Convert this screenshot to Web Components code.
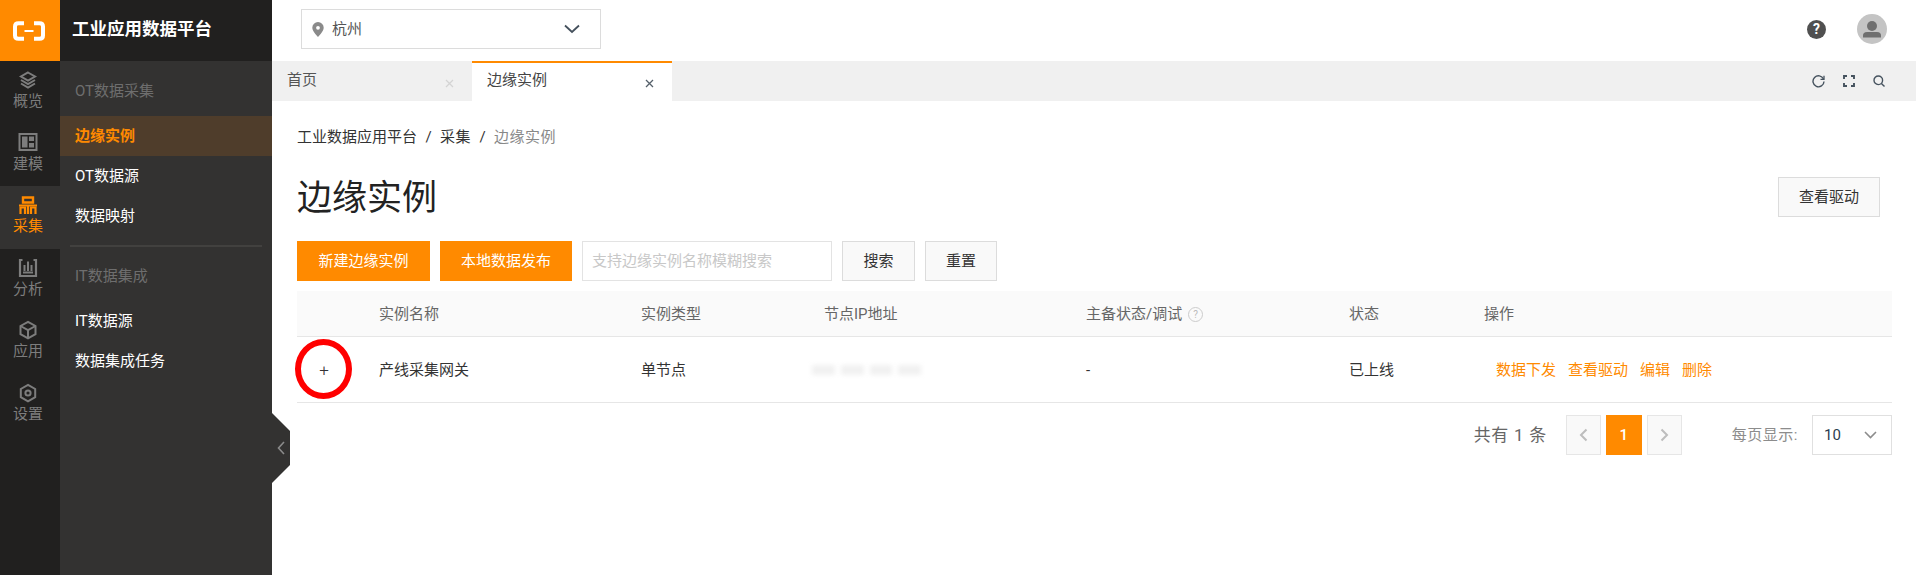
<!DOCTYPE html>
<html lang="zh-CN">
<head>
<meta charset="utf-8">
<title>边缘实例</title>
<style>
  html, body { margin: 0; height: 100%; overflow: hidden; background: #fff; }
  body { font: 15px/20px Roboto, "Noto Sans CJK SC", sans-serif; color: #333; }
</style>
</head>
<body>
<app-shell>
  <side-rail slot="rail">
    <rail-item label="概览" icon="layers"></rail-item>
    <rail-item label="建模" icon="model"></rail-item>
    <rail-item label="采集" icon="collect" active></rail-item>
    <rail-item label="分析" icon="chart"></rail-item>
    <rail-item label="应用" icon="box"></rail-item>
    <rail-item label="设置" icon="gear"></rail-item>
  </side-rail>
  <side-nav slot="nav" heading="工业应用数据平台">
    <nav-group>OT数据采集</nav-group>
    <nav-link active>边缘实例</nav-link>
    <nav-link>OT数据源</nav-link>
    <nav-link>数据映射</nav-link>
    <nav-divider></nav-divider>
    <nav-group>IT数据集成</nav-group>
    <nav-link>IT数据源</nav-link>
    <nav-link>数据集成任务</nav-link>
  </side-nav>
  <top-bar slot="top" city="杭州"></top-bar>
  <tab-bar slot="top">
    <tab-item>首页</tab-item>
    <tab-item active>边缘实例</tab-item>
  </tab-bar>
  <instance-page></instance-page>
</app-shell>

<script>
const ICONS = {
  layers: '<path d="M9 1.500 16 5.500 9 9.500 2 5.500Z" stroke-width="2"/><path d="M2 9 9 13 16 9M2 12.500 9 16.500 16 12.500" stroke-width="2"/>',
  model: '<rect x="0.500" y="0" width="17" height="16" stroke-width="2"/><rect x="3" y="2.500" width="5.500" height="11" fill="currentColor" stroke="none"/><rect x="10" y="2.500" width="5" height="4.500" fill="currentColor" stroke="none"/><rect x="10" y="9" width="5" height="4.500" fill="currentColor" stroke="none"/>',
  collect: '<path d="M4 1.500H14V6.500H4Z" stroke-width="2.400"/><path d="M0 9.500H18" stroke-width="2"/><path d="M1.500 18V11.500H6V18M9 9.500V18M12 18V11.500H16.500V18" stroke-width="2.200"/>',
  chart: '<path d="M3.500 1H1V17H17V1H14.500" stroke-width="2.200"/><path d="M5.500 12V6M9 12V2.500M12.500 12V6M4 13.500H14" stroke-width="2"/>',
  box: '<path d="M9 .8 16.500 5V13.200L9 17.400 1.500 13.200V5Z" stroke-width="2"/><path d="M1.500 5 9 9.200 16.500 5M9 9.200V17.400" stroke-width="2"/>',
  gear: '<path d="M9 .8 16.200 5V13.200L9 17.400 1.800 13.200V5Z" stroke-width="2"/><circle cx="9" cy="9" r="2.600" stroke-width="2"/>'
};

class AppShell extends HTMLElement {
  constructor() {
    super();
    this.attachShadow({ mode: 'open' });
    this.shadowRoot.innerHTML = `
      <style>
        :host { display: flex; width: 100%; height: 100vh; position: relative; }
        .side { display: flex; flex: none; width: 272px; }
        .main { flex: 1; min-width: 0; display: flex; flex-direction: column; }
        .handle { position: absolute; left: 272px; top: 413px; width: 18px; height: 70px; background: #333231;
          clip-path: polygon(0 0, 100% 18px, 100% 52px, 0 100%); color: #8a8a8a; display: flex; align-items: center; justify-content: center; }
      </style>
      <div class="side"><slot name="rail"></slot><slot name="nav"></slot></div>
      <div class="main"><slot name="top"></slot><slot></slot></div>
      <div class="handle"><svg width="8" height="14" viewBox="0 0 8 14" fill="none" stroke="currentColor" stroke-width="1.600"><path d="M7 1 1.500 7 7 13"/></svg></div>`;
  }
}

class SideRail extends HTMLElement {
  constructor() {
    super();
    this.attachShadow({ mode: 'open' });
    this.shadowRoot.innerHTML = `
      <style>
        :host { display: block; flex: none; width: 60px; background: #21201f; }
        .logo { height: 61px; background: #ff8a00; display: flex; align-items: center; justify-content: center; padding-right: 2px; box-sizing: border-box; }
      </style>
      <div class="logo">
        <svg width="32" height="20" viewBox="0 0 32 20" fill="none" stroke="#fff" stroke-width="4">
          <path d="M11 2.200H5.500Q2 2.200 2 5.500V14.500Q2 17.800 5.500 17.800H11M21 2.200H26.500Q30 2.200 30 5.500V14.500Q30 17.800 26.500 17.800H21"/>
          <path d="M11.500 10H20.500" stroke-width="2"/>
        </svg>
      </div>
      <slot></slot>`;
  }
}

class RailItem extends HTMLElement {
  constructor() {
    super();
    this.attachShadow({ mode: 'open' });
    const icon = ICONS[this.getAttribute('icon')] || '';
    this.shadowRoot.innerHTML = `
      <style>
        :host { display: flex; flex-direction: column; align-items: center; box-sizing: border-box; height: 62.5px; padding: 10px 4px 0 0; color: #7d7d7d; line-height: 20px; }
        :host([active]) { background: #333231; color: #ff8a00; }
        svg { display: block; margin-bottom: 2px; overflow: visible; }
      </style>
      <svg width="18" height="18" viewBox="0 0 18 18" fill="none" stroke="currentColor">${icon}</svg>
      <span>${this.getAttribute('label')}</span>`;
  }
}

class SideNav extends HTMLElement {
  constructor() {
    super();
    this.attachShadow({ mode: 'open' });
    this.shadowRoot.innerHTML = `
      <style>
        :host { display: block; flex: none; width: 212px; background: #333231; }
        .head { height: 61px; background: #21201f; color: #fff; font-size: 17.500px; font-weight: 700; line-height: 58px; padding-left: 12px; }
      </style>
      <div class="head">${this.getAttribute('heading')}</div>
      <slot></slot>`;
  }
}

class NavGroup extends HTMLElement {
  constructor() {
    super();
    this.attachShadow({ mode: 'open' });
    this.shadowRoot.innerHTML = `
      <style>
        :host { display: block; height: 55px; line-height: 60px; padding-left: 15px; color: #6e6e6e; }
      </style>
      <slot></slot>`;
  }
}

class NavLink extends HTMLElement {
  constructor() {
    super();
    this.attachShadow({ mode: 'open' });
    this.shadowRoot.innerHTML = `
      <style>
        :host { display: block; height: 40px; line-height: 40px; padding-left: 15px; color: #fff; font-weight: 400; }
        :host([active]) { background: #4f3d2b; color: #ff8a00; font-weight: 700; }
      </style>
      <slot></slot>`;
  }
}

class NavDivider extends HTMLElement {
  constructor() {
    super();
    this.attachShadow({ mode: 'open' });
    this.shadowRoot.innerHTML = `
      <style>
        :host { display: block; height: 2px; margin: 9px 10px -1px; background: #42413f; }
      </style>`;
  }
}

class TopBar extends HTMLElement {
  constructor() {
    super();
    this.attachShadow({ mode: 'open' });
    this.shadowRoot.innerHTML = `
      <style>
        :host { display: flex; align-items: center; height: 61px; box-sizing: border-box; padding: 0 29px 3px 29px; }
        .city { display: flex; align-items: center; width: 300px; height: 40px; box-sizing: border-box; border: 1px solid #dcdcdc; padding: 0 20px 0 10px; color: #555; }
        .city span { flex: 1; margin-left: 8px; }
        .right { margin-left: auto; display: flex; align-items: center; gap: 31px; }
        .help { width: 19px; height: 19px; border-radius: 50%; background: #505050; color: #fff; font: 700 14px/19px Roboto, sans-serif; text-align: center; }
        .avatar { display: block; }
      </style>
      <div class="city">
        <svg width="12" height="15" viewBox="0 0 12 15"><path fill="#8a8a8a" fill-rule="evenodd" d="M6 0a5.700 5.700 0 0 1 5.700 5.700C11.700 9.300 6 15 6 15S.3 9.300.3 5.700A5.700 5.700 0 0 1 6 0Zm0 3.900a1.900 1.900 0 1 0 0 3.800 1.900 1.900 0 0 0 0-3.800Z"/></svg>
        <span>${this.getAttribute('city')}</span>
        <svg width="16" height="10" viewBox="0 0 16 10" fill="none" stroke="#44505c" stroke-width="1.800"><path d="M1 1.500 8 8 15 1.500"/></svg>
      </div>
      <div class="right">
        <div class="help">?</div>
        <svg class="avatar" width="30" height="30" viewBox="0 0 30 30">
          <circle cx="15" cy="15" r="15" fill="#c4c4c4"/>
          <circle cx="15" cy="12" r="5" fill="#6f6f6f"/>
          <path d="M6 23.500V21.500Q6 18 10 18H20Q24 18 24 21.500V23.500Z" fill="#6f6f6f"/>
        </svg>
      </div>`;
  }
}

class TabBar extends HTMLElement {
  constructor() {
    super();
    this.attachShadow({ mode: 'open' });
    this.shadowRoot.innerHTML = `
      <style>
        :host { display: flex; height: 40px; background: #f0f0f0; padding-right: 31px; }
        .tools { margin-left: auto; display: flex; align-items: center; gap: 18px; color: #45525e; }
        svg { display: block; }
      </style>
      <slot></slot>
      <div class="tools">
        <svg width="13" height="13" viewBox="0 0 13 13" fill="none" stroke="currentColor" stroke-width="1.400"><path d="M11.500 4A5.500 5.500 0 1 0 12 6.500"/><path d="M12 .8V4.300H8.500" stroke-width="1.300"/></svg>
        <svg width="12" height="12" viewBox="0 0 12 12" fill="none" stroke="currentColor" stroke-width="1.900"><path d="M1 4V1H4M8 1H11V4M11 8V11H8M4 11H1V8"/></svg>
        <svg width="12" height="12" viewBox="0 0 12 12" fill="none" stroke="currentColor" stroke-width="1.400"><circle cx="5.300" cy="5.300" r="4.300"/><path d="M8.400 8.400 11.500 11.500"/></svg>
      </div>`;
  }
}

class TabItem extends HTMLElement {
  constructor() {
    super();
    this.attachShadow({ mode: 'open' });
    this.shadowRoot.innerHTML = `
      <style>
        :host { display: flex; align-items: center; box-sizing: border-box; width: 200px; height: 40px; padding: 0 18px 5px 15px; color: #555; border-top: 2px solid transparent; }
        :host([active]) { background: #fff; border-top-color: #ff8a00; color: #444; }
        span { flex: 1; }
        svg { color: #d4d4d4; margin-top: 7px; }
        :host([active]) svg { color: #55606a; }
      </style>
      <span><slot></slot></span>
      <svg width="9" height="9" viewBox="0 0 9 9" stroke="currentColor" stroke-width="1.300"><path d="M1 1 8 8M8 1 1 8"/></svg>`;
  }
}

class UiButton extends HTMLElement {
  constructor() {
    super();
    this.attachShadow({ mode: 'open' });
    this.shadowRoot.innerHTML = `
      <style>
        :host { display: inline-flex; align-items: center; justify-content: center; flex: none; box-sizing: border-box; height: 40px; padding: 0 20px;
          border: 1px solid #dcdcdc; background: #f9f9f9; color: #333; }
        :host([primary]) { background: #ff8a00; border-color: #ff8a00; color: #fff; }
      </style>
      <slot></slot>`;
  }
}

class PagerBar extends HTMLElement {
  constructor() {
    super();
    this.attachShadow({ mode: 'open' });
    this.shadowRoot.innerHTML = `
      <style>
        :host { display: flex; align-items: center; justify-content: flex-end; height: 40px; margin-top: 12px; }
        .total { font-size: 17px; letter-spacing: .7px; color: #666; margin-right: 19px; }
        .page { box-sizing: border-box; width: 35px; height: 40px; border: 1px solid #e6e6e6; background: #f9f9f9; display: flex; align-items: center; justify-content: center; color: #bdbdbd; }
        .cur { width: 36px; margin: 0 5px; background: #ff8a00; border-color: #ff8a00; color: #fff; font-weight: 500; }
        .size { margin-left: 50px; color: #8c8c8c; letter-spacing: .5px; }
        .select { box-sizing: border-box; width: 80px; height: 40px; margin-left: 14px; border: 1px solid #e0e0e0; display: flex; align-items: center; justify-content: space-between; padding: 0 14px 0 11px; color: #2b3d4f; }
      </style>
      <span class="total">共有 1 条</span>
      <div class="page"><svg width="9" height="14" viewBox="0 0 9 14" fill="none" stroke="currentColor" stroke-width="2"><path d="M7.500 1.500 2 7 7.500 12.500"/></svg></div>
      <div class="page cur">1</div>
      <div class="page"><svg width="9" height="14" viewBox="0 0 9 14" fill="none" stroke="currentColor" stroke-width="2"><path d="M1.500 1.500 7 7 1.500 12.500"/></svg></div>
      <span class="size">每页显示:</span>
      <div class="select">10<svg width="13" height="8" viewBox="0 0 13 8" fill="none" stroke="#8c8c8c" stroke-width="1.600"><path d="M1 1 6.500 6.500 12 1"/></svg></div>`;
  }
}

class InstanceTable extends HTMLElement {
  constructor() {
    super();
    this.attachShadow({ mode: 'open' });
    this.shadowRoot.innerHTML = `
      <style>
        :host { display: block; margin-top: 10px; }
        .row { display: grid; grid-template-columns: 82px 262px 183px 262px 263px 135px 1fr; align-items: center; border-bottom: 1px solid #e6e6e6; }
        .head { height: 46px; box-sizing: border-box; background: #fafafa; color: #666; }
        .body { height: 66px; box-sizing: border-box; color: #333; }
        .expand { position: relative; width: 54px; text-align: center; font-size: 17px; font-weight: 300; }
        .expand::after { content: ""; position: absolute; left: -2px; top: -21px; width: 57px; height: 60px; box-sizing: border-box; border: 6.500px solid #f00; border-radius: 50%; }
        .mask { display: flex; gap: 6px; width: 109px; margin-left: -12px; filter: blur(2px); }
        .mask i { flex: 1; height: 10px; background: #f1f1f1; }
        .q { display: inline-block; box-sizing: border-box; width: 15px; height: 15px; margin-left: 6px; border: 1px solid #ccc; border-radius: 50%; color: #bbb; font-size: 10px; line-height: 13px; text-align: center; vertical-align: 1px; }
        .ops { display: flex; gap: 12px; padding-left: 12px; color: #ff8a00; white-space: nowrap; }
      </style>
      <div class="row head">
        <span></span><span>实例名称</span><span>实例类型</span><span>节点IP地址</span>
        <span>主备状态/调试<span class="q">?</span></span><span>状态</span><span>操作</span>
      </div>
      <div class="row body">
        <span class="expand">+</span><span>产线采集网关</span><span>单节点</span>
        <div class="mask"><i></i><i></i><i></i><i></i></div>
        <span>-</span><span>已上线</span>
        <div class="ops"><span>数据下发</span><span>查看驱动</span><span>编辑</span><span>删除</span></div>
      </div>`;
  }
}

class InstancePage extends HTMLElement {
  constructor() {
    super();
    this.attachShadow({ mode: 'open' });
    this.shadowRoot.innerHTML = `
      <style>
        :host { display: block; padding: 26px 24px 0 25px; }
        .crumbs { display: flex; height: 20px; color: #333; }
        .crumbs b { font-weight: 400; width: 23px; text-align: center; }
        .crumbs b + span { letter-spacing: .5px; }
        .crumbs em { font-style: normal; color: #888; letter-spacing: .5px; }
        .title { display: flex; align-items: center; justify-content: space-between; height: 50px; margin-top: 25px; padding-right: 12px; }
        h1 { margin: 0; font-size: 35px; font-weight: 400; line-height: 50px; color: #222; padding-top: 3px; }
        .tools { display: flex; gap: 10px; margin-top: 19px; }
        .tools ui-button[primary] { width: 133px; padding: 0; }
        .tools ui-button[primary] + ui-button[primary] { width: 132px; }
        .search { box-sizing: border-box; width: 250px; height: 40px; padding-left: 9px; line-height: 38px; border: 1px solid #e3e3e3; color: #c8c8c8; }
        .tools ui-button.small { width: 73px; padding: 0; }
        .tools ui-button.small:last-child { width: 72px; }
      </style>
      <div class="crumbs"><span>工业数据应用平台</span><b>/</b><span>采集</span><b>/</b><em>边缘实例</em></div>
      <div class="title"><h1>边缘实例</h1><ui-button>查看驱动</ui-button></div>
      <div class="tools">
        <ui-button primary>新建边缘实例</ui-button>
        <ui-button primary>本地数据发布</ui-button>
        <div class="search">支持边缘实例名称模糊搜索</div>
        <ui-button class="small">搜索</ui-button>
        <ui-button class="small">重置</ui-button>
      </div>
      <instance-table></instance-table>
      <pager-bar></pager-bar>`;
  }
}

customElements.define('app-shell', AppShell);
customElements.define('side-rail', SideRail);
customElements.define('rail-item', RailItem);
customElements.define('side-nav', SideNav);
customElements.define('nav-group', NavGroup);
customElements.define('nav-link', NavLink);
customElements.define('nav-divider', NavDivider);
customElements.define('top-bar', TopBar);
customElements.define('tab-bar', TabBar);
customElements.define('tab-item', TabItem);
customElements.define('ui-button', UiButton);
customElements.define('pager-bar', PagerBar);
customElements.define('instance-table', InstanceTable);
customElements.define('instance-page', InstancePage);
</script>
</body>
</html>
